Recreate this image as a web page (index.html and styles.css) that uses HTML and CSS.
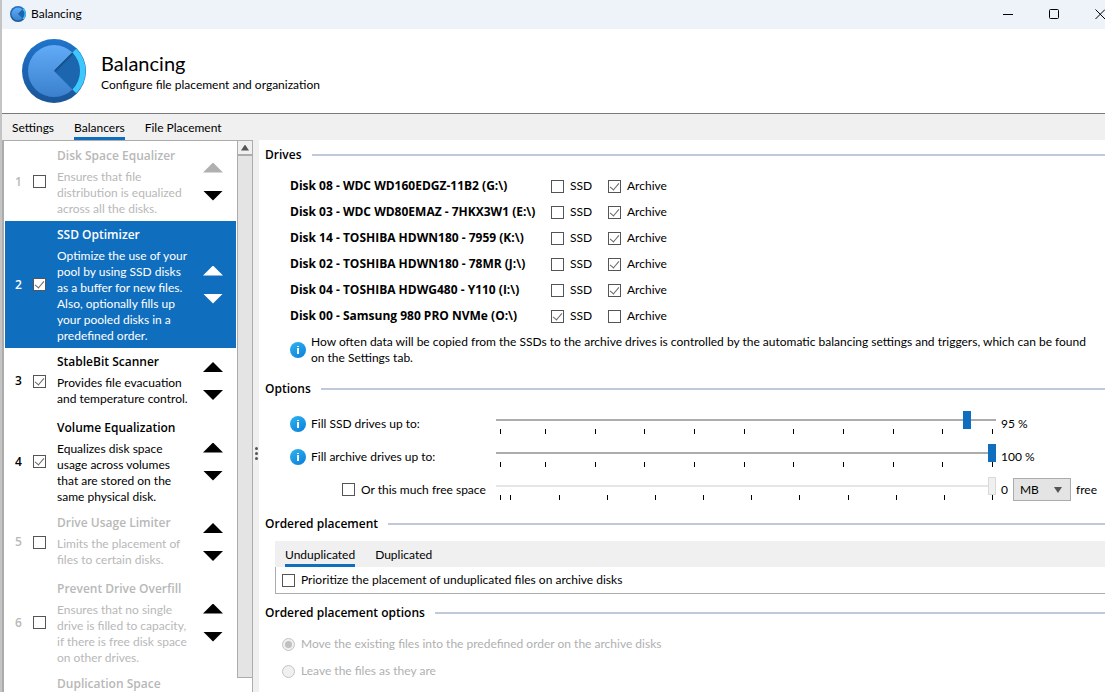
FILE: index.html
```html
<!DOCTYPE html>
<html lang="en">

<head>
  <meta charset="UTF-8">
  <meta name="viewport" content="width=device-width, initial-scale=1.0">
  <title>Balancing</title>
  <link rel="stylesheet" href="styles.css">
</head>

<body>
  <svg width="0" height="0" class="defs" aria-hidden="true">
    <defs>
      <linearGradient id="ring" x1="0" y1="0" x2="0" y2="1">
        <stop offset="0" stop-color="#1f74cc"/>
        <stop offset="1" stop-color="#1a5597"/>
      </linearGradient>
      <linearGradient id="disc" x1="0" y1="0" x2="0" y2="1">
        <stop offset="0" stop-color="#62abf7"/>
        <stop offset="1" stop-color="#3a80cd"/>
      </linearGradient>
      <linearGradient id="info-bg" x1="0" y1="0" x2="0.6" y2="1">
        <stop offset="0" stop-color="#2fb4f0"/>
        <stop offset="1" stop-color="#0f86dd"/>
      </linearGradient>
    </defs>
    <symbol id="logo" viewBox="0 0 64 64">
      <circle cx="32" cy="32" r="32" fill="url(#ring)"/>
      <circle cx="32" cy="32" r="26" fill="#1b66ae"/>
      <path d="M32 32 L50.4 13.6 A26 26 0 1 0 50.4 50.4 Z" fill="url(#disc)"/>
      <path d="M33 32 L51 14" stroke="#17528c" stroke-width="2" fill="none"/>
      <path d="M54.3 9.7 A31.5 31.5 0 0 1 54.3 54.3 L50.4 50.4 A26 26 0 0 0 50.4 13.6 Z" fill="#3cc8fc"/>
    </symbol>
    <symbol id="info" viewBox="0 0 16 16">
      <circle cx="8" cy="8" r="8" fill="url(#info-bg)"/>
      <rect x="7" y="4" width="2" height="1" fill="#fff"/>
      <rect x="7" y="6" width="2" height="6" fill="#fff"/>
    </symbol>
  </svg>

  <div class="window">
    <div class="titlebar">
      <svg class="app-icon"><use href="#logo"/></svg>
      <span class="title">Balancing</span>
      <button class="win-btn" aria-label="Minimize">
        <svg viewBox="0 0 11 11"><path d="M0 5.5 H10"/></svg>
      </button>
      <button class="win-btn" aria-label="Maximize">
        <svg viewBox="0 0 11 11"><rect x="0.5" y="0.5" width="9" height="9" rx="1"/></svg>
      </button>
      <button class="win-btn" aria-label="Close">
        <svg viewBox="0 0 11 11"><path d="M0.5 0.5 L10 10 M10 0.5 L0.5 10"/></svg>
      </button>
    </div>

    <header class="header">
      <svg class="logo"><use href="#logo"/></svg>
      <div>
        <h1>Balancing</h1>
        <p>Configure file placement and organization</p>
      </div>
    </header>

    <nav class="tabs">
      <button>Settings</button>
      <button class="active">Balancers</button>
      <button>File Placement</button>
    </nav>

    <div class="content">
      <aside class="sidebar">
        <ol class="balancers">
          <li class="off">
            <span class="num">1</span>
            <input type="checkbox" aria-labelledby="b1">
            <div class="text">
              <h2 id="b1">Disk Space Equalizer</h2>
              <p>Ensures that file<br>distribution is equalized<br>across all the disks.</p>
            </div>
            <div class="arrows">
              <button class="up" aria-label="Move up" disabled></button>
              <button class="down" aria-label="Move down"></button>
            </div>
          </li>
          <li class="selected">
            <span class="num">2</span>
            <input type="checkbox" aria-labelledby="b2" checked>
            <div class="text">
              <h2 id="b2">SSD Optimizer</h2>
              <p>Optimize the use of your<br>pool by using SSD disks<br>as a buffer for new files.<br>Also, optionally fills up<br>your pooled disks in a<br>predefined order.</p>
            </div>
            <div class="arrows">
              <button class="up" aria-label="Move up"></button>
              <button class="down" aria-label="Move down"></button>
            </div>
          </li>
          <li>
            <span class="num">3</span>
            <input type="checkbox" aria-labelledby="b3" checked>
            <div class="text">
              <h2 id="b3">StableBit Scanner</h2>
              <p>Provides file evacuation<br>and temperature control.</p>
            </div>
            <div class="arrows">
              <button class="up" aria-label="Move up"></button>
              <button class="down" aria-label="Move down"></button>
            </div>
          </li>
          <li>
            <span class="num">4</span>
            <input type="checkbox" aria-labelledby="b4" checked>
            <div class="text">
              <h2 id="b4">Volume Equalization</h2>
              <p>Equalizes disk space<br>usage across volumes<br>that are stored on the<br>same physical disk.</p>
            </div>
            <div class="arrows">
              <button class="up" aria-label="Move up"></button>
              <button class="down" aria-label="Move down"></button>
            </div>
          </li>
          <li class="off">
            <span class="num">5</span>
            <input type="checkbox" aria-labelledby="b5">
            <div class="text">
              <h2 id="b5">Drive Usage Limiter</h2>
              <p>Limits the placement of<br>files to certain disks.</p>
            </div>
            <div class="arrows">
              <button class="up" aria-label="Move up"></button>
              <button class="down" aria-label="Move down"></button>
            </div>
          </li>
          <li class="off">
            <span class="num">6</span>
            <input type="checkbox" aria-labelledby="b6">
            <div class="text">
              <h2 id="b6">Prevent Drive Overfill</h2>
              <p>Ensures that no single<br>drive is filled to capacity,<br>if there is free disk space<br>on other drives.</p>
            </div>
            <div class="arrows">
              <button class="up" aria-label="Move up"></button>
              <button class="down" aria-label="Move down"></button>
            </div>
          </li>
          <li class="off last">
            <div class="text">
              <h2>Duplication Space</h2>
            </div>
          </li>
        </ol>
        <div class="scrollbar">
          <button class="scroll-up" aria-label="Scroll up"></button>
          <div class="thumb"></div>
        </div>
      </aside>
      <div class="splitter"><i></i><i></i><i></i></div>

      <main class="main">
        <h3>Drives</h3>
        <table class="drives">
          <tr>
            <th scope="row">Disk 08 - WDC WD160EDGZ-11B2 (G:\)</th>
            <td><label><input type="checkbox">SSD</label></td>
            <td><label><input type="checkbox" checked>Archive</label></td>
          </tr>
          <tr>
            <th scope="row">Disk 03 - WDC WD80EMAZ - 7HKX3W1 (E:\)</th>
            <td><label><input type="checkbox">SSD</label></td>
            <td><label><input type="checkbox" checked>Archive</label></td>
          </tr>
          <tr>
            <th scope="row">Disk 14 - TOSHIBA HDWN180 - 7959 (K:\)</th>
            <td><label><input type="checkbox">SSD</label></td>
            <td><label><input type="checkbox" checked>Archive</label></td>
          </tr>
          <tr>
            <th scope="row">Disk 02 - TOSHIBA HDWN180 - 78MR (J:\)</th>
            <td><label><input type="checkbox">SSD</label></td>
            <td><label><input type="checkbox" checked>Archive</label></td>
          </tr>
          <tr>
            <th scope="row">Disk 04 - TOSHIBA HDWG480 - Y110 (I:\)</th>
            <td><label><input type="checkbox">SSD</label></td>
            <td><label><input type="checkbox" checked>Archive</label></td>
          </tr>
          <tr>
            <th scope="row">Disk 00 - Samsung 980 PRO NVMe (O:\)</th>
            <td><label><input type="checkbox" checked>SSD</label></td>
            <td><label><input type="checkbox">Archive</label></td>
          </tr>
        </table>
        <div class="note">
          <svg class="info"><use href="#info"/></svg>
          <p>How often data will be copied from the SSDs to the archive drives is controlled by the automatic balancing settings and triggers, which can be found on the Settings tab.</p>
        </div>

        <h3>Options</h3>
        <div class="options">
          <div class="option">
            <svg class="info"><use href="#info"/></svg>
            <label for="fill-ssd">Fill SSD drives up to:</label>
          </div>
          <div class="slider">
            <input type="range" id="fill-ssd" min="1" max="100" value="95">
            <div class="ticks"><i></i><i></i><i></i><i></i><i></i><i></i><i></i><i></i><i></i><i></i></div>
          </div>
          <div class="value">95 %</div>

          <div class="option">
            <svg class="info"><use href="#info"/></svg>
            <label for="fill-archive">Fill archive drives up to:</label>
          </div>
          <div class="slider">
            <input type="range" id="fill-archive" min="1" max="100" value="100">
            <div class="ticks"><i></i><i></i><i></i><i></i><i></i><i></i><i></i><i></i><i></i><i></i></div>
          </div>
          <div class="value">100 %</div>

          <div class="option indent">
            <label><input type="checkbox">Or this much free space</label>
          </div>
          <div class="slider free-space">
            <input type="range" aria-label="Free space" min="0" max="100" value="100" disabled>
            <div class="ticks"><i></i><i></i><i></i><i></i><i></i><i></i><i></i><i></i><i></i><i></i><i></i></div>
          </div>
          <div class="value">
            <span>0</span>
            <div class="select">
              <select aria-label="Unit">
                <option>MB</option>
                <option>GB</option>
                <option>TB</option>
              </select>
            </div>
            <span>free</span>
          </div>
        </div>

        <h3>Ordered placement</h3>
        <div class="placement">
          <nav class="tabs">
            <button class="active">Unduplicated</button>
            <button>Duplicated</button>
          </nav>
          <div class="panel">
            <label><input type="checkbox">Prioritize the placement of unduplicated files on archive disks</label>
          </div>
        </div>

        <h3>Ordered placement options</h3>
        <div class="radios">
          <label><input type="radio" name="existing" checked disabled>Move the existing files into the predefined order on the archive disks</label>
          <label><input type="radio" name="existing" disabled>Leave the files as they are</label>
        </div>
      </main>
    </div>
  </div>
</body>

</html>
```

FILE: styles.css
```css
* {
  margin: 0;
  padding: 0;
  box-sizing: border-box;
}

body {
  font-family: Lato, "Open Sans", sans-serif;
  font-size: 12px;
  line-height: 16px;
  color: #000;
  background: #fff;
  overflow: hidden;
}

button,
input,
select {
  font: inherit;
  color: inherit;
  border: 0;
  background: none;
}

.defs {
  position: absolute;
}

.window {
  height: 100vh;
  display: flex;
  flex-direction: column;
  border-left: 2px solid #c4c4c4;
}

/* title bar */
.titlebar {
  height: 28px;
  flex: none;
  display: flex;
  align-items: center;
  padding-left: 8px;
  background: #eef3fa;
}

.app-icon {
  width: 16px;
  height: 16px;
  margin-right: 5px;
}

.title {
  flex: 1;
}

.win-btn {
  width: 46px;
  height: 28px;
  flex: none;
}

.win-btn:last-child {
  margin-right: -18px;
}

.win-btn svg {
  display: block;
  width: 11px;
  height: 11px;
  margin: 0 auto;
  fill: none;
  stroke: #000;
}

/* header */
.header {
  height: 86px;
  flex: none;
  display: flex;
  align-items: center;
  gap: 15px;
  padding-left: 20px;
  border-top: 1px solid #eef3fa;
  border-bottom: 1px solid #7a7a7a;
}

.logo {
  width: 64px;
  height: 64px;
}

.header h1 {
  font-size: 20px;
  font-weight: 400;
  line-height: 28px;
}

.tabs {
  height: 26px;
  flex: none;
  display: flex;
  gap: 20px;
  padding-left: 10px;
  background: #f0f0f0;
}

.tabs button {
  padding-top: 4px;
  border-bottom: 3px solid transparent;
}

.tabs .active {
  border-color: #106ebe;
}

.content {
  flex: 1;
  min-height: 0;
  display: flex;
}

/* balancers list */
.sidebar {
  width: 251px;
  flex: none;
  display: flex;
  border: 1px solid #acacac;
  border-width: 1px 1px 0 2px;
}

.balancers {
  flex: 1;
  padding: 1px 1px 0;
  list-style: none;
  overflow: hidden;
}

.balancers li {
  min-height: 66px;
  display: flex;
  align-items: center;
  padding: 0 13px 0 10px;
}

.num,
h2,
h3,
th {
  font-family: "Open Sans", sans-serif;
  font-size: 12px;
  font-weight: 600;
  line-height: 16px;
}

.num {
  width: 18px;
}

.balancers .text {
  flex: 1;
  align-self: flex-start;
  padding: 6px 0 4px 11px;
  white-space: nowrap;
}

.balancers h2 {
  margin-bottom: 5px;
}

.balancers .off {
  color: #b8b8b8;
}

.balancers .last .text {
  padding-left: 42px;
}

.balancers .selected {
  color: #fff;
  background: #106ebe;
}

.arrows {
  display: flex;
  flex-direction: column;
  gap: 18px;
}

.arrows button {
  width: 20px;
  height: 10px;
  background: #000;
}

.arrows .up {
  clip-path: polygon(50% 0, 100% 100%, 0 100%);
}

.arrows .down {
  clip-path: polygon(0 0, 100% 0, 50% 100%);
}

.arrows button:disabled {
  background: #b0b0b0;
}

.selected .arrows button {
  background: #fff;
}

.scrollbar {
  width: 15px;
  flex: none;
  display: flex;
  flex-direction: column;
  border-left: 1px solid #acacac;
  margin-bottom: 14px;
}

.scroll-up {
  height: 14px;
  background: #f0f0f0;
  border-bottom: 1px solid #acacac;
}

.scroll-up::before {
  content: '';
  display: block;
  width: 8px;
  height: 6px;
  margin: 0 auto;
  background: #555;
  clip-path: polygon(50% 0, 100% 100%, 0 100%);
}

.thumb {
  flex: 1;
  background: #e4e4e4;
  border: 1px solid #acacac;
  border-width: 1px 0;
}

.splitter {
  width: 6px;
  flex: none;
  display: flex;
  flex-direction: column;
  align-items: center;
  justify-content: center;
  gap: 2px;
  padding-top: 74px;
  background: #f0f0f0;
}

.splitter i {
  width: 3px;
  height: 3px;
  border-radius: 50%;
  background: #555;
}

/* check boxes and radio buttons */
label {
  display: flex;
  align-items: center;
  gap: 6px;
  white-space: nowrap;
}

input[type="checkbox"] {
  appearance: none;
  width: 13px;
  height: 13px;
  flex: none;
  border: 1px solid #555;
  background: #fff;
}

input[type="checkbox"]:checked::before {
  content: '';
  display: block;
  width: 4px;
  height: 8px;
  margin: 0 auto;
  border: solid #666;
  border-width: 0 1px 1px 0;
  transform: rotate(40deg);
}

input[type="radio"] {
  appearance: none;
  width: 13px;
  height: 13px;
  flex: none;
  padding: 2px;
  border: 1px solid #c4c4c4;
  border-radius: 50%;
  background: #f0f0f0;
}

input[type="radio"]:checked::before {
  content: '';
  display: block;
  width: 7px;
  height: 7px;
  border-radius: 50%;
  background: #c0c0c0;
}

/* settings pane */
.main {
  flex: 1;
  min-width: 0;
  padding: 7px 0 0 6px;
}

h3 {
  display: flex;
  align-items: center;
  gap: 10px;
}

h3::after {
  content: '';
  flex: 1;
  height: 2px;
  background: #c0c9da;
}

.drives {
  margin: 10px 0 5px 25px;
  border-collapse: collapse;
}

.drives th {
  width: 261px;
  height: 26px;
  font-weight: 700;
  text-align: left;
  white-space: nowrap;
}

.drives td {
  width: 57px;
}

.note {
  display: flex;
  align-items: center;
  gap: 5px;
  margin: 0 5px 15px 25px;
}

.info {
  width: 16px;
  height: 16px;
  flex: none;
}

.options {
  display: grid;
  grid-template-columns: 206px 1fr 109px;
  grid-auto-rows: 33px;
  margin: 10px 0 10px 25px;
}

.option {
  display: flex;
  align-items: center;
  gap: 5px;
}

.option.indent {
  padding-left: 52px;
}

.slider {
  padding-top: 4px;
}

input[type="range"] {
  appearance: none;
  display: block;
  width: 100%;
  height: 18px;
}

input[type="range"]::-webkit-slider-runnable-track {
  height: 18px;
  background: linear-gradient(#acacac, #acacac) center / 100% 2px no-repeat;
}

input[type="range"]::-webkit-slider-thumb {
  appearance: none;
  width: 8px;
  height: 18px;
  background: #106ebe;
}

input[type="range"]:disabled::-webkit-slider-runnable-track {
  background-image: linear-gradient(#e6e6e6, #e6e6e6);
}

input[type="range"]:disabled::-webkit-slider-thumb {
  border: 1px solid #d9d9d9;
  background: #f0f0f0;
}

.ticks {
  display: flex;
  height: 5px;
  margin: 0 3px 0 4px;
}

.ticks i {
  flex: 10;
  border-left: 1px solid #000;
}

.ticks i:first-child {
  flex: 9;
}

.free-space .ticks i:first-child {
  flex: 2;
}

.ticks i:last-child {
  border-right: 1px solid #000;
}

.value {
  display: flex;
  align-items: center;
  gap: 5px;
  padding-left: 5px;
}

.select {
  position: relative;
}

.select::after {
  content: '';
  position: absolute;
  top: 9px;
  right: 9px;
  width: 8px;
  height: 6px;
  background: #555;
  clip-path: polygon(0 0, 100% 0, 50% 100%);
  pointer-events: none;
}

select {
  appearance: none;
  display: block;
  width: 58px;
  height: 23px;
  padding-left: 6px;
  border: 1px solid #acacac;
  background: #e4e4e4;
}

.placement {
  margin: 9px 0 11px 10px;
}

.panel {
  height: 27px;
  display: flex;
  align-items: center;
  padding-left: 6px;
  border: 1px solid #acacac;
  border-width: 0 0 1px 1px;
}

.radios {
  display: flex;
  flex-direction: column;
  gap: 11px;
  margin: 15px 0 0 17px;
  color: #b0b0b0;
}
```
